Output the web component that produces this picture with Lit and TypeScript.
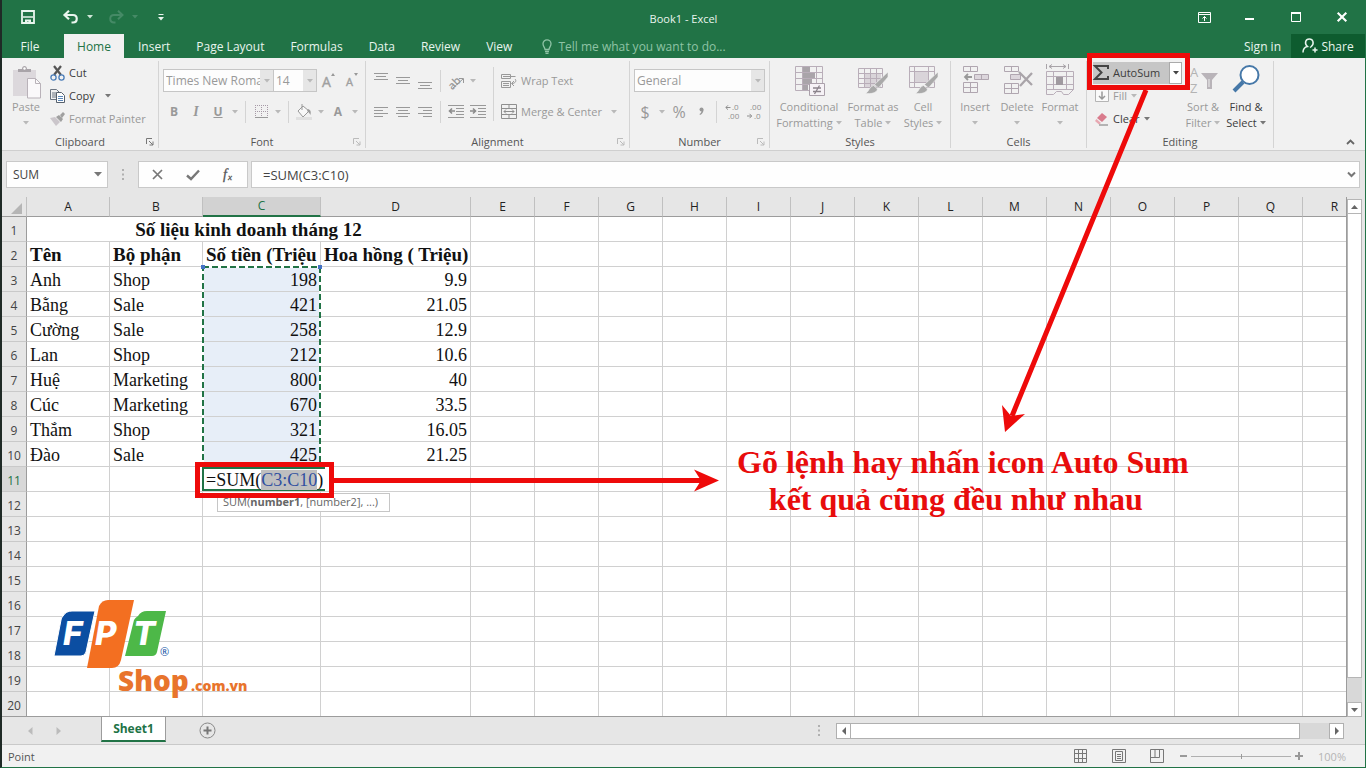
import { LitElement, html, svg, css, nothing } from "lit";
import { customElement } from "lit/decorators.js";
import { classMap } from "lit/directives/class-map.js";

const icon = (w: number, h: number, body: unknown) =>
  html`<svg class="ic" width=${w} height=${h} viewBox="0 0 ${w} ${h}" fill="none" aria-hidden="true">${body}</svg>`;

const G = "#b9b9b9";

const caret = (color = G) => icon(6, 4, svg`<path d="M0 0h6L3 3.6z" fill=${color} />`);

const lines = (rows: [number, number, number][]) =>
  icon(14, 18, rows.map(([x, y, w]) => svg`<rect x=${x} y=${y} width=${w} height="1" fill="#999" />`));

const alignTop = lines([[0, 1, 14], [2, 4, 10], [0, 7, 14]]);
const alignMid = lines([[0, 5, 14], [2, 8, 10], [0, 11, 14]]);
const alignBot = lines([[0, 10, 14], [2, 13, 10], [0, 16, 14]]);
const alignLeft = lines([[0, 4, 14], [0, 7, 9], [0, 10, 14], [0, 13, 9]]);
const alignCenter = lines([[0, 4, 14], [2, 7, 10], [0, 10, 14], [2, 13, 10]]);
const alignRight = lines([[0, 4, 14], [5, 7, 9], [0, 10, 14], [5, 13, 9]]);

const indent = (flip: boolean) =>
  icon(16, 16, svg`
    <g fill="#999">
      <rect x="0" y="1" width="16" height="1" /><rect x="8" y="4" width="8" height="1" />
      <rect x="8" y="7" width="8" height="1" /><rect x="8" y="10" width="8" height="1" />
      <rect x="0" y="13" width="16" height="1" />
    </g>
    <path d=${flip ? "M0 7h5M3 4.5 5.5 7 3 9.5" : "M7 7H2M4 4.5 1.5 7 4 9.5"} stroke="#8c8c8c" stroke-width="1.6" />`);

const brush = svg`<path d="M31 8v5L21.500 24l-4-3.500z" fill="#a9a9a9" stroke="#f1f1f1" stroke-width=".6" /><path d="M16.500 21.500l4 3.500c-1 4-6 5-12.500 4.500 4-1 4-7 8.500-8z" fill="#a9a9a9" stroke="#f1f1f1" stroke-width=".6" />`;

const launcher = (color: string) =>
  icon(8, 8, svg`<path d="M.5 6V.5H6M3 3l4 4M7 3.500V7H3.500" stroke=${color} />`);

const COLS = "ABCDEFGHIJKLMNOPQR".split("");
const PEOPLE: [string, string, string, string][] = [
  ["Anh", "Shop", "198", "9.9"],
  ["Bằng", "Sale", "421", "21.05"],
  ["Cường", "Sale", "258", "12.9"],
  ["Lan", "Shop", "212", "10.6"],
  ["Huệ", "Marketing", "800", "40"],
  ["Cúc", "Marketing", "670", "33.5"],
  ["Thắm", "Shop", "321", "16.05"],
  ["Đào", "Sale", "425", "21.25"],
];

const base = css`
  :host, * { box-sizing: border-box; }
  button, input {
    font: inherit; color: inherit; background: none; border: 0; padding: 0; margin: 0;
    border-radius: 0; outline: 0; min-width: 0;
  }
  button { display: inline-flex; align-items: center; justify-content: center; white-space: nowrap; }
  svg { display: block; flex: none; overflow: visible; }
`;

@customElement("excel-titlebar")
class ExcelTitlebar extends LitElement {
  static styles = [base, css`
    :host { display: block; background: #217346; color: #e9f5ee; }
    .top { display: grid; grid-template-columns: 1fr auto 1fr; align-items: center; height: 34px; }
    .quick { display: flex; align-items: center; padding-left: 19px; gap: 8px; }
    .quick button { height: 22px; min-width: 6px; }
    .save { margin-right: 20px; }
    .redo { margin-left: 7px; }
    .more { margin-left: 12px; }
    .title { font-size: 11px; padding-top: 3px; }
    .win { display: flex; justify-content: flex-end; }
    .win button { width: 46px; height: 32px; }
    .tabs { display: flex; height: 24px; align-items: stretch; font-size: 12px; }
    .tab { display: flex; align-items: center; justify-content: center; color: inherit; text-decoration: none; padding: 0 13px; }
    .file { width: 62px; padding: 0 6px 0 0; }
    .home { width: 60px; padding: 0; margin-right: 1px; background: #f1f1f1; color: #217346; }
    .tell { display: flex; align-items: center; gap: 6px; margin-left: 17px; color: #8fc3a5; flex: 1; }
    .tell input { width: 220px; }
    .tell input::placeholder { color: #8fc3a5; opacity: 1; }
    .sign { font-size: 12px; padding: 0 10px; }
    .share { width: 74px; background: #0e5c2f; gap: 3px; }
  `];
  render() {
    return html`
      <div class="top">
        <div class="quick">
          <button class="save" aria-label="Save">${icon(14, 14, svg`<path d="M1 1h12v12H1z" stroke="#e9f5ee" stroke-width="1.800" /><path d="M2 7h10" stroke="#e9f5ee" stroke-width="1.500" /><path d="M4 9.500h6V13H7.500v-1.500H6V13H4z" fill="#e9f5ee" />`)}</button>
          <button aria-label="Undo">${icon(16, 14, svg`<path d="M1.500 5h8.500c5 0 5 7.500 0 7.500H8.500M6 .800 1.500 5 6 9.200" stroke="#e9f5ee" stroke-width="2.200" />`)}</button>
          <button aria-label="Undo options">${caret("#cfe6d8")}</button>
          <button class="redo" aria-label="Redo">${icon(16, 14, svg`<path d="M14.500 5H6C1 5 1 12.500 6 12.500h1.500M10 .800 14.500 5 10 9.200" stroke="#458a66" stroke-width="2" />`)}</button>
          <button aria-label="Redo options">${caret("#458a66")}</button>
          <button class="more" aria-label="Customize toolbar">${icon(6, 7, svg`<path d="M.500 .500h5" stroke="#e9f5ee" /><path d="M0 3h6L3 6.500z" fill="#e9f5ee" />`)}</button>
        </div>
        <div class="title">Book1 - Excel</div>
        <div class="win">
          <button aria-label="Ribbon display">${icon(13, 11, svg`<path d="M.500 .500h12v10H.500zM.500 2.500h12M6.500 9V4.500M4.500 6.500l2-2 2 2" stroke="#fff" />`)}</button>
          <button aria-label="Minimize">${icon(10, 10, svg`<path d="M0 7h9" stroke="#fff" stroke-width="2" />`)}</button>
          <button aria-label="Maximize">${icon(10, 10, svg`<path d="M.500 1h9v8.500h-9z" stroke="#fff" /><path d="M0 1h10" stroke="#fff" stroke-width="2" />`)}</button>
          <button aria-label="Close">${icon(10, 10, svg`<path d="M.700 .700l8.600 8.600M9.300 .700.700 9.300" stroke="#fff" stroke-width="2.100" />`)}</button>
        </div>
      </div>
      <nav class="tabs">
        <a class="tab file" href="#file">File</a>
        <a class="tab home" href="#home">Home</a>
        ${["Insert", "Page Layout", "Formulas", "Data", "Review", "View"].map((t) => html`<a class="tab" href="#${t}">${t}</a>`)}
        <label class="tell">${icon(10, 15, svg`<path d="M3 10.500C3 8.500 1 7.500 1 4.800a4 4 0 0 1 8 0c0 2.700-2 3.700-2 5.700zM3 12.500h4M3.500 14.300h3" stroke="#8fc3a5" stroke-width="1.300" />`)}
          <input placeholder="Tell me what you want to do..." aria-label="Tell me what you want to do" /></label>
        <a class="tab sign" href="#signin">Sign in</a>
        <button class="share">${icon(16, 16, svg`<path d="M1 14.500c0-3.500 2-5.500 4.500-6C2 5.500 3.500 1 7.300 1s5.300 4.500 2 7.500L8 9.500M10.500 12h5M13 9.500v5" stroke="#e9f5ee" stroke-width="1.500" />`)}Share</button>
      </nav>`;
  }
}

@customElement("excel-ribbon")
class ExcelRibbon extends LitElement {
  static styles = [base, css`
    :host { display: flex; position: relative; background: #f1f1f1; border-bottom: 1px solid #cfcfcf; height: 93px; padding: 3px 0 2px; font-size: 11px; color: #999; }
    .group { display: flex; flex-direction: column; border-right: 1px solid #d4d4d4; flex: none; }
    .body { flex: 1; display: flex; min-height: 0; }
    .foot { display: grid; grid-template-columns: 1fr auto 1fr; align-items: center; height: 13px; flex: none; color: #555; }
    .foot span { grid-column: 2; line-height: 13px; }
    .foot button { justify-self: end; margin-right: 4px; }
    .clip { width: 157px; } .font { width: 207px; } .align { width: 264px; } .num { width: 140px; }
    .styles { width: 181px; } .cells { width: 136px; } .edit { width: 187px; }
    .stack { display: flex; flex-direction: column; align-items: flex-start; }
    .row { display: flex; align-items: center; height: 31px; }
    .two { padding-top: 4px; }
    .small { display: flex; height: 23px; justify-content: flex-start; align-items: center; gap: 4px; }
    .on { color: #3c3c3c; }
    .big { flex-direction: column; justify-content: flex-start; padding-top: 3px; line-height: 16px; }
    .big .ic32 { height: 35px; }
    .big .second { display: flex; align-items: center; gap: 3px; height: 16px; }
    .paste { width: 48px; }
    .b { width: 22px; height: 22px; font-size: 12px; }
    .c { width: 12px; height: 22px; }
    .bold { font-weight: 700; } .ital { font-style: italic; font-weight: 700; font-size: 14px; font-family: "Liberation Serif", serif; } .under { text-decoration: underline; font-weight: 700; }
    .sep { width: 1px; height: 22px; background: #d4d4d4; margin: 0 4px; flex: none; }
    .tall { height: 54px; margin-top: 6px; }
    .combo { display: flex; height: 23px; background: #fdfdfd; border: 1px solid #c6c6c6; font-size: 12px; }
    .combo input { flex: 1; padding-left: 2px; width: 0; }
    .combo button { width: 13px; background: #e6e6e6; }
    .fontname { width: 111px; } .fontsize { width: 43px; border-left: 0; } .fmt { width: 131px; }
    .in3 { padding-left: 3px; } .in4 { padding-left: 4px; }
    .wide { gap: 4px; padding-left: 3px; }
    .wide .caret { margin-left: 5px; }
    .grow { width: 23px; }
    .glyph { font-size: 16px; }
    .edit .small { padding-left: 3px; }
    .edit .sumrow { padding-left: 2px; gap: 0; }
    .sum { background: #c6c6c6; width: 76px; height: 22px; gap: 4px; padding-left: 1px; justify-content: flex-start; color: #3c3c3c; }
    .sumc { background: #fff; width: 13px; height: 22px; border: 1px solid #aaa; }
    .c44 { width: 44px; } .c42 { width: 42px; } .c56 { width: 58px; } .c68 { width: 70px; }
    .edit .stack { width: 91px; }
    .collapse { position: absolute; right: 10px; bottom: 5px; }
  `];

  private foot(label: string, launch?: string) {
    return html`<div class="foot"><span>${label}</span>${launch ? html`<button aria-label="${label} settings">${launcher(launch)}</button>` : nothing}</div>`;
  }
  private big(cls: string, pic: unknown, a: string, b: string | null, color = G) {
    return html`<button class="big ${cls}"><span class="ic32">${pic}</span><span>${a}</span><span class="second">${b}${caret(color)}</span></button>`;
  }
  private caretBtn(label: string) {
    return html`<button class="c" aria-label=${label}>${caret()}</button>`;
  }

  render() {
    const rows = (body: unknown) => icon(32, 34, body);
    return html`
      <section class="group clip">
        <div class="body">
          ${this.big("paste", rows(svg`<path d="M3 6h23v26H3z" fill="#dcd8dc" /><path d="M8 8V5h4c0-4 5-4 5 0h4v3z" fill="#a9a4a9" /><circle cx="14.500" cy="4.500" r="1.200" fill="#fff" /><path d="M17.500 14.500h8l5 5V34h-13z" fill="#faf8fa" stroke="#b9b2b9" /><path d="M25.500 14.500v5h5" stroke="#b9b2b9" />`), "Paste", null)}
          <div class="stack">
            <button class="small on">${icon(15, 16, svg`<path d="M4 1l7 9M11 1 4 10" stroke="#555" stroke-width="2.200" /><circle cx="3.500" cy="12.500" r="2.600" stroke="#4a7db8" stroke-width="1.300" /><circle cx="11.500" cy="12.500" r="2.600" stroke="#4a7db8" stroke-width="1.300" />`)}Cut</button>
            <button class="small on">${icon(15, 14, svg`<path d="M.500 .500h6l3 3v7h-9zM2 4h4M2 6h4M2 8h4" stroke="#6b7480" /><path d="M6.500 3.500h5l3 3v7h-8z" fill="#fff" stroke="#56606c" /><path d="M8 7.500h5M8 9.500h5M8 11.500h5" stroke="#5b86b8" />`)}<span>Copy</span>${icon(12, 4, svg`<path d="M6 0h6L9 3.600z" fill="#777" />`)}</button>
            <button class="small">${icon(15, 14, svg`<path d="M10 3l3-3 2 2-3 4zM6 5l3-2 4 4-2 3z" fill="#a0a0a0" /><path d="M0 6l5-1 5 5-4 4z" fill="#cbc6cb" />`)}Format Painter</button>
          </div>
        </div>
        ${this.foot("Clipboard", "#777")}
      </section>

      <section class="group font">
        <div class="body"><div class="stack two in4">
          <div class="row">
            <div class="combo fontname"><input aria-label="Font" value="Times New Roma" /><button aria-label="Font list">${caret()}</button></div>
            <div class="combo fontsize"><input aria-label="Font size" value="14" /><button aria-label="Size list">${caret()}</button></div>
            <button class="grow" aria-label="Grow font">${icon(13, 18, svg`<path d="M9 4h4l-2-3z" fill="#999" /><text x="0" y="15" font-size="14" fill="#a0a0a0" stroke="#a0a0a0" stroke-width=".4">A</text>`)}</button>
            <button class="grow" aria-label="Shrink font">${icon(12, 18, svg`<path d="M8 1h4l-2 3z" fill="#999" /><text x="0" y="14" font-size="11" fill="#a0a0a0" stroke="#a0a0a0" stroke-width=".4">A</text>`)}</button>
          </div>
          <div class="row">
            <button class="b bold">B</button><button class="b ital">I</button><button class="b under">U</button>${this.caretBtn("Underline style")}
            <i class="sep"></i>
            <button class="b" aria-label="Borders">${icon(13, 13, svg`<path d="M0 .500h13M.500 0v12M6.500 0v12M12.500 0v12M0 6.500h13" stroke="#a79aa7" stroke-dasharray="1 1" /><path d="M0 12.500h13" stroke="#999" />`)}</button>${this.caretBtn("Border list")}
            <i class="sep"></i>
            <button class="b" aria-label="Fill colour">${icon(16, 16, svg`<path d="M2 7l5-5 6 5-6 6z" stroke="#999" fill="#f8f8f8" /><path d="M6 0v6" stroke="#999" /><path d="M12 5c3 1 3 3 2.500 6-1-2-2-3-3.500-4z" fill="#999" /><path d="M0 13h16v3H0z" fill="#e0e0e0" />`)}</button>${this.caretBtn("Fill list")}
            <button class="b bold">A</button>${this.caretBtn("Font colour list")}
          </div>
        </div></div>
        ${this.foot("Font", "#bbb")}
      </section>

      <section class="group align">
        <div class="body">
          <div class="stack two in4">
            <div class="row">
              <button class="b" aria-label="Top align">${alignTop}</button><button class="b" aria-label="Middle align">${alignMid}</button><button class="b" aria-label="Bottom align">${alignBot}</button>
              <i class="sep"></i>
              <button class="b" aria-label="Orientation">${icon(17, 16, svg`<text x="-1" y="13" font-size="11" font-weight="600" fill="#999" transform="rotate(-45 7 9)">ab</text><path d="M5 15 15 6M11 5.500h4.500V10" stroke="#999" />`)}</button>${this.caretBtn("Orientation list")}
            </div>
            <div class="row">
              <button class="b" aria-label="Align left">${alignLeft}</button><button class="b" aria-label="Center">${alignCenter}</button><button class="b" aria-label="Align right">${alignRight}</button>
              <i class="sep"></i>
              <button class="b" aria-label="Decrease indent">${indent(false)}</button><button class="b" aria-label="Increase indent">${indent(true)}</button>
            </div>
          </div>
          <i class="sep tall"></i>
          <div class="stack two">
            <button class="row wide">${icon(16, 16, svg`<path d="M.500 1.500h9v4h-9zM.500 8.500h9v6h-9zM2 3.500h12.500M2 10.500h6M2 12.500h6M14 6c2 2 0 4.500-3 4.500M13 8l-2.500 2.500 2.500 2.500" stroke="#999" />`)}Wrap Text</button>
            <button class="row wide">${icon(16, 16, svg`<path d="M.500 .500h15v14H.500zM.500 4.500h15M.500 10.500h15M8 0v4.500M8 10.500V15M3 7.500h10M5 5.500l-2 2 2 2M11 5.500l2 2-2 2" stroke="#8f8f8f" />`)}Merge &amp; Center<span class="caret">${caret()}</span></button>
          </div>
        </div>
        ${this.foot("Alignment", "#bbb")}
      </section>

      <section class="group num">
        <div class="body"><div class="stack two in4">
          <div class="row"><div class="combo fmt"><input aria-label="Number format" value="General" /><button aria-label="Format list">${caret()}</button></div></div>
          <div class="row">
            <button class="b glyph">$</button>${this.caretBtn("Currency list")}
            <button class="b glyph">%</button><button class="b" aria-label="Comma style">${icon(5, 9, svg`<circle cx="2.500" cy="2.500" r="2" fill="#999" /><path d="M4.500 2.500c0 3-1.500 4.500-3.500 5.500l-.5-1c1.200-.8 2-1.500 2-3z" fill="#999" />`)}</button>
            <i class="sep"></i>
            <button class="b" aria-label="Increase decimal">${icon(15, 18, svg`<path d="M5.500 4.500H1M3 2.300.800 4.500 3 6.700" stroke="#8f8f8f" /><text x="7" y="7" font-size="8" fill="#8f8f8f">.0</text><text x="3" y="16" font-size="8" fill="#8f8f8f">.00</text>`)}</button>
            <button class="b" aria-label="Decrease decimal">${icon(15, 18, svg`<path d="M0 13h4.500M2.500 10.800 4.700 13l-2.200 2.200" stroke="#8f8f8f" /><text x="3" y="7" font-size="8" fill="#8f8f8f">.00</text><text x="7" y="16" font-size="8" fill="#8f8f8f">.0</text>`)}</button>
          </div>
        </div></div>
        ${this.foot("Number", "#bbb")}
      </section>

      <section class="group styles">
        <div class="body in4">
          ${this.big("c68", rows(svg`<path d="M2.500 2.500h27v24h-27zM2.500 8.500h27M2.500 14.500h27M2.500 20.500h27M9.500 2.500v24M23.500 2.500v24" stroke="#b9aeb9" fill="none" /><path d="M10 3h7v5h-7zM10 9h12v5H10zM10 15h9v5h-9zM10 21h5v5h-5z" fill="#a9a4a9" /><path d="M16.500 19.500h15v12h-15z" fill="#f6f2f6" stroke="#aaa0aa" /><path d="M20 24h8M20 27.500h8M26.500 21.500l-5 8.500" stroke="#8c848c" stroke-width="1.300" />`), "Conditional", "Formatting")}
          ${this.big("c56", rows(svg`<path d="M7 9h17v15H7z" fill="#d9d4d9" /><path d="M1.500 4.500h24v19h-24zM1.500 9.500h24M1.500 14.500h24M1.500 19.500h24M7.500 4.500v19M13.500 4.500v19M19.500 4.500v19" stroke="#b9aeb9" />${brush}`), "Format as", "Table")}
          ${this.big("c42", rows(svg`<path d="M7 8h14v11H7z" fill="#d9d4d9" /><path d="M2.500 2.500h25v21h-25zM2.500 7.500h25M2.500 18.500h25M7.500 2.500v21M21.500 2.500v21" stroke="#b9aeb9" />${brush}`), "Cell", "Styles")}
        </div>
        ${this.foot("Styles")}
      </section>

      <section class="group cells">
        <div class="body in3">
          ${this.big("c42", rows(svg`<path d="M4.500 2.500h14v5h-14zM11.500 2.500v5M4.500 18.500h14v10h-14zM4.500 23.500h14M11.500 18.500v10" stroke="#b0a6b0" /><path d="M15.500 10.500h14v5h-14zM22.500 10.500v5" stroke="#b0a6b0" fill="#dcd6dc" /><path d="M13 13H6M9 10l-3 3 3 3" stroke="#999" stroke-width="1.800" />`), "Insert", null)}
          ${this.big("c42", rows(svg`<path d="M3.500 2.500h14v5h-14zM10.500 2.500v5M3.500 19.500h14v10h-14zM3.500 24.500h14M10.500 19.500v10" stroke="#b0a6b0" /><path d="M9.500 10.500h10v5h-10z" stroke="#b0a6b0" fill="#dcd6dc" /><path d="M18 8l13 13M31 9 19 22" stroke="#a9a4a9" stroke-width="2.300" />`), "Delete", null)}
          ${this.big("c44", rows(svg`<path d="M2.500 0v5M24.500 0v5M5 2.500h17M8 .500l-3 2 3 2M19 .500l3 2-3 2" stroke="#a9a4a9" /><path d="M2.500 7.500h27v18h-27zM2.500 12.500h27M2.500 20.500h27M9.500 7.500v18M22.500 7.500v18M2.500 25.500v5h7l3-3h5l2 3h5l5-5" stroke="#b9aeb9" /><path d="M12 13h7v8h-7z" fill="#a09aa0" />`), "Format", null)}
        </div>
        ${this.foot("Cells")}
      </section>

      <section class="group edit">
        <div class="body in4">
          <div class="stack">
            <div class="small sumrow"><button class="sum">${icon(15, 15, svg`<path d="M14 4V1H1l6.500 6.500L1 14h13v-3" stroke="#444" stroke-width="2" />`)}AutoSum</button><button class="sumc" aria-label="AutoSum list">${caret("#444")}</button></div>
            <button class="small">${icon(15, 14, svg`<path d="M1.500 .500h13v12h-13z" fill="#fafafa" stroke="#b5b5b5" /><path d="M8 2.500V10M5 7l3 3 3-3" stroke="#999" stroke-width="1.500" />`)}Fill${caret()}</button>
            <button class="small on">${icon(15, 14, svg`<path d="M8 1l5 4-5 5-5-4z" fill="#d97b8c" /><path d="M2.500 7l4.500 4-2 1.500L1 9z" fill="#e8a8b2" /><path d="M5 13h9" stroke="#777" />`)}Clear${caret("#777")}</button>
          </div>
          ${this.big("c42", rows(svg`<text x="3" y="13" font-size="13" fill="#b3b3b3">A</text><text x="3" y="29" font-size="13" fill="#b3b3b3">Z</text><path d="M14 9h17l-6 7v9h-5v-9z" fill="#b9b4b9" /><path d="M22 15v8" stroke="#eee" />`), "Sort &", "Filter")}
          ${this.big("c44 on", rows(svg`<path d="M13 18 4 27" stroke="#4678a8" stroke-width="4" /><circle cx="19.500" cy="11" r="9" fill="#fff" stroke="#4678a8" stroke-width="2" />`), "Find &", "Select", "#777")}
        </div>
        ${this.foot("Editing")}
      </section>
      <button class="collapse" aria-label="Collapse ribbon">${icon(9, 6, svg`<path d="M1 5l3.500-3.500L8 5" stroke="#666" stroke-width="1.800" />`)}</button>`;
  }
}

@customElement("excel-formula-bar")
class ExcelFormulaBar extends LitElement {
  static styles = [base, css`
    :host { display: flex; flex: none; height: 46px; padding: 10px 5px 9px 4px; background: #e6e6e6; font-size: 12px; color: #444; }
    .box { display: flex; align-items: center; background: #fefefe; border: 1px solid #c9c9c9; height: 27px; }
    .name { width: 102px; padding: 0 5px 0 6px; }
    .name input, .formula input { flex: 1; width: 0; }
    .dots { width: 30px; display: flex; align-items: center; justify-content: center; }
    .tools { width: 110px; justify-content: space-around; margin-right: 3px; }
    .tools button { width: 30px; height: 24px; }
    .formula { flex: 1; padding: 0 3px 0 11px; font-size: 13px; }
  `];
  render() {
    return html`
      <div class="box name"><input aria-label="Name box" value="SUM" /><button aria-label="Names">${icon(8, 5, svg`<path d="M0 0h8L4 4.500z" fill="#777" />`)}</button></div>
      <div class="dots">${icon(2, 11, svg`<path d="M0 1h2M0 5.500h2M0 10h2" stroke="#b0b0b0" stroke-width="2" />`)}</div>
      <div class="box tools">
        <button aria-label="Cancel">${icon(11, 11, svg`<path d="M1 1l9 9M10 1 1 10" stroke="#777" stroke-width="1.700" />`)}</button>
        <button aria-label="Enter">${icon(14, 12, svg`<path d="M1 6.500 5 10 13 1.500" stroke="#777" stroke-width="2.400" />`)}</button>
        <button aria-label="Insert function">${icon(14, 16, svg`<text x="1" y="12" font-size="14" font-style="italic" font-family="Liberation Serif" fill="#555" stroke="#555" stroke-width=".3">f</text><text x="6" y="13" font-size="9" font-style="italic" font-family="Liberation Serif" fill="#555" stroke="#555" stroke-width=".3">x</text>`)}</button>
      </div>
      <div class="box formula"><input aria-label="Formula" value="=SUM(C3:C10)" /><button aria-label="Expand">${icon(9, 7, svg`<path d="M1 1.500 4.500 5 8 1.500" stroke="#777" stroke-width="2" />`)}</button></div>`;
  }
}

@customElement("excel-sheet")
class ExcelSheet extends LitElement {
  static styles = [base, css`
    :host { display: flex; background: #e6e6e6; flex: 1; min-height: 0; }
    .view { position: relative; flex: 1; overflow: hidden; border-right: 1px solid #9c9c9c; border-bottom: 1px solid #9c9c9c; }
    table { border-collapse: separate; border-spacing: 0; table-layout: fixed; width: 1364px; }
    .w0 { width: 25px; } .w1 { width: 83px; } .w2 { width: 93px; } .w3 { width: 118px; } .w4 { width: 150px; } .w5 { width: 64px; }
    th { font-weight: 400; font-size: 12px; color: #444; padding: 0; background: #e6e6e6; text-align: center; line-height: 14px; }
    thead th { height: 20px; border-right: 1px solid #c0c0c0; border-bottom: 1px solid #9c9c9c; color: #222; }
    thead th.sel { background: #d2d2d2; color: #217346; border-bottom: 2px solid #217346; }
    .corner svg { margin: 4px 0 0 8px; }
    tbody th { border-right: 1px solid #9c9c9c; border-bottom: 1px solid #c9c9c9; padding-top: 4px; }
    tbody th.sel { background: #d8d8d8; color: #217346; }
    td { height: 25px; padding: 2px 3px 0; border-right: 1px solid #d0d0d0; border-bottom: 1px solid #d0d0d0; background: #fff;
      font: 18px/22px "Liberation Serif", "Times New Roman", serif; color: #111; white-space: nowrap; overflow: hidden; }
    .h { font-weight: 700; font-size: 19px; } .mid { text-align: center; } .n { text-align: right; }
    .pick { background: #e7eef8; }
    .ants, .edit, .hint { position: absolute; }
    .ants { left: 199px; top: 68px; }
    .edit { left: 200px; top: 270px; height: 24px; min-width: 119px; padding: 1px 2px 0; background: #fff; border: 2px solid #217346; border-right: 0; font: 18px/20px "Liberation Serif", serif; white-space: nowrap; color: #111; }
    .edit mark { background: #bfbfbf; color: #2f4fa0; }
    .hint { left: 215px; top: 296px; height: 19px; line-height: 15px; padding: 0 11px 0 5px; background: #fff; border: 1px solid #c6c6c6; color: #666; font-size: 11px; }
    .logo { position: absolute; left: 48px; top: 402px; }
    .vbar { width: 18px; display: flex; flex-direction: column; padding: 2px 3px 0 0; }
    .vbar button { width: 15px; height: 15px; background: #fff; border: 1px solid #b5b5b5; }
    .track { flex: 1; background: #d8d8d8; display: flex; flex-direction: column; width: 15px; }
    .thumb { flex: 0 0 95%; background: #fff; border: 1px solid #b5b5b5; border-top: 0; }
  `];
  render() {
    const cells = (r: number) => {
      if (r === 1) return [html`<td class="h mid" colspan="4">Số liệu kinh doanh tháng 12</td>`, ...this.blank(14)];
      if (r === 2) return [...["Tên", "Bộ phận", "Số tiền (Triệu", "Hoa hồng ( Triệu)"].map((t) => html`<td class="h">${t}</td>`), ...this.blank(14)];
      const p = PEOPLE[r - 3];
      if (!p) return this.blank(18);
      return [...p.map((t, i) => html`<td class=${classMap({ n: i > 1, pick: i === 2 })}>${t}</td>`), ...this.blank(14)];
    };
    return html`
      <div class="view">
        <table>
          <colgroup><col class="w0" /><col class="w1" /><col class="w2" /><col class="w3" /><col class="w4" />${COLS.slice(4).map(() => html`<col class="w5" />`)}</colgroup>
          <thead><tr><th class="corner">${icon(13, 13, svg`<path d="M12 1v11H1z" fill="#b5b5b5" />`)}</th>
            ${COLS.map((c) => html`<th class=${classMap({ sel: c === "C" })}>${c}</th>`)}</tr></thead>
          <tbody>${Array.from({ length: 20 }, (_, i) => html`<tr><th class=${classMap({ sel: i === 10 })}>${i + 1}</th>${cells(i + 1)}</tr>`)}</tbody>
        </table>
        <svg class="ants" width="122" height="204" fill="none">
          <path d="M2 2H119V202H2z" stroke="#fff" stroke-width="2" /><path d="M2 2H119V202H2z" stroke="#217346" stroke-width="2" stroke-dasharray="6 3" />
          <path d="M0 0h4v4H0zM117 0h4v4h-4z" fill="#4472c4" />
        </svg>
        <div class="hint">SUM(<b>number1</b>, [number2], ...)</div>
        <div class="edit">=SUM(<mark>C3:C10</mark>)</div>
        <svg class="logo" width="210" height="102" role="img" aria-label="FPT Shop">
          <path d="M13 17q3-5 9-5h23l-9 41q-1 4-5 4H4l7-36q0-2 2-4z" fill="#0b4ea2" stroke="#fff" stroke-width="1" />
          <path d="M49 7q3-6 9-6h26L71 61q-2 8-9 8H37z" fill="#f36f21" />
          <path d="M88 17q3-5 9-5h19l-9 41q-1 4-5 4H75l9-36q1-2 4-4z" fill="#4db848" />
          <g fill="#fff" font-family="Inter" font-weight="800" font-style="italic" font-size="33"><text x="13" y="46">F</text><text x="45" y="46">P</text><text x="83" y="46">T</text></g>
          <text x="110" y="57" font-size="11" fill="#0b4ea2" font-family="Open Sans">®</text>
          <text x="68" y="92" font-size="28" fill="#e8742c" font-family="Open Sans" font-weight="800">Shop</text>
          <text x="141" y="92" font-size="14" fill="#e8742c" font-family="Open Sans" font-weight="800">.com.vn</text>
        </svg>
      </div>
      <div class="vbar">
        <button aria-label="Scroll up">${icon(7, 4, svg`<path d="M0 4h7L3.500 0z" fill="#666" />`)}</button>
        <div class="track"><div class="thumb"></div></div>
        <button aria-label="Scroll down">${icon(7, 4, svg`<path d="M0 0h7L3.500 4z" fill="#666" />`)}</button>
      </div>`;
  }
  private blank(n: number) {
    return Array.from({ length: n }, () => html`<td></td>`);
  }
}

@customElement("excel-footer")
class ExcelFooter extends LitElement {
  static styles = [base, css`
    :host { display: block; background: #e6e6e6; font-size: 11px; color: #444; }
    .sheets { display: flex; align-items: center; height: 28px; padding-right: 21px; border-bottom: 1px solid #c9c9c9; }
    .nav { width: 99px; display: flex; gap: 23px; padding-left: 26px; }
    .tab { align-self: flex-start; height: 25px; width: 65px; background: #fff; color: #217346; font-weight: 700; font-size: 12px; border: 1px solid #9c9c9c; border-top: 0; border-bottom: 2px solid #217346; }
    .add { margin-left: 33px; }
    .gap { flex: 1; }
    .dots { margin-right: 16px; }
    .hbar { display: flex; height: 16px; width: 508px; background: #d8d8d8; }
    .hbar button { width: 15px; background: #fff; border: 1px solid #b0b0b0; }
    .thumb { width: 449px; background: #fff; border: 1px solid #b0b0b0; border-left: 0; }
    .rest { flex: 1; }
    .status { display: flex; align-items: center; height: 22px; background: #f1f1f1; padding: 0 19px 0 6px; color: #555; }
    .views { display: flex; gap: 24px; margin-right: 16px; }
    .zoom { display: flex; align-items: center; gap: 4px; }
    .zoom input { appearance: none; width: 100px; height: 13px; background: linear-gradient(#b0b0b0, #b0b0b0) center / 100% 1px no-repeat; }
    .zoom input::-webkit-slider-thumb { appearance: none; width: 1px; height: 5px; background: #999; }
    .pct { margin-left: 15px; color: #b5b5b5; }
  `];
  render() {
    return html`
      <div class="sheets">
        <div class="nav"><button aria-label="Previous sheet">${icon(5, 8, svg`<path d="M4.500 0v8L0 4z" fill="#bbb" />`)}</button><button aria-label="Next sheet">${icon(5, 8, svg`<path d="M.500 0v8L5 4z" fill="#bbb" />`)}</button></div>
        <button class="tab">Sheet1</button>
        <button class="add" aria-label="New sheet">${icon(17, 17, svg`<circle cx="8.500" cy="8.500" r="7.500" stroke="#888" /><path d="M4.500 8.500h8M8.500 4.500v8" stroke="#777" stroke-width="2" />`)}</button>
        <span class="gap"></span>
        <span class="dots">${icon(2, 11, svg`<path d="M0 1h2M0 5.500h2M0 10h2" stroke="#b0b0b0" stroke-width="2" />`)}</span>
        <div class="hbar"><button aria-label="Scroll left">${icon(4, 8, svg`<path d="M4 0v8L0 4z" fill="#666" />`)}</button><div class="thumb"></div><div class="rest"></div><button aria-label="Scroll right">${icon(4, 8, svg`<path d="M0 0v8l4-4z" fill="#666" />`)}</button></div>
      </div>
      <div class="status">
        <span>Point</span><span class="gap"></span>
        <div class="views">
          <button aria-label="Normal view">${icon(14, 14, svg`<path d="M.500 .500h12v13H.500zM4.500 0v14M8.500 0v14M0 4.500h13M0 9.500h13" stroke="#777" />`)}</button>
          <button aria-label="Page layout view">${icon(14, 14, svg`<path d="M.500 .500h13v13H.500zM3.500 2.500h7v9h-7zM5 5.500h4M5 7.500h4M5 9.500h4" stroke="#777" />`)}</button>
          <button aria-label="Page break view">${icon(14, 14, svg`<path d="M.500 .500h13v13H.500zM.500 8.500h9V.500M5 0v8" stroke="#777" />`)}</button>
        </div>
        <div class="zoom"><button aria-label="Zoom out">${icon(7, 8, svg`<path d="M0 4h7" stroke="#999" stroke-width="2" />`)}</button><input type="range" aria-label="Zoom" min="0" max="200" value="100" /><button aria-label="Zoom in">${icon(8, 8, svg`<path d="M0 4h8M4 0v8" stroke="#999" stroke-width="2" />`)}</button></div>
        <span class="pct">100%</span>
      </div>`;
  }
}

@customElement("app-root")
class AppRoot extends LitElement {
  static styles = css`
    :host { display: block; position: relative; height: 100vh; overflow: hidden; background: #dfeee5; font-family: "Open Sans", "Noto Sans", sans-serif; }
    .window { display: flex; flex-direction: column; height: 100%; border-left: 2px solid #1f2a26; border-right: 1px solid #217346; border-bottom: 1px solid #217346; box-sizing: border-box; }
    .marks { position: absolute; left: 0; top: 0; pointer-events: none; }
    .note { position: absolute; left: 737px; top: 444px; margin: 0; text-align: center; color: #e80c0c; font: 700 32px/37px "Liberation Serif", "Times New Roman", serif; white-space: nowrap; }
    .note span { display: block; padding-right: 14px; }
  `;
  render() {
    return html`
      <div class="window">
        <excel-titlebar></excel-titlebar>
        <excel-ribbon></excel-ribbon>
        <excel-formula-bar></excel-formula-bar>
        <excel-sheet></excel-sheet>
        <excel-footer></excel-footer>
      </div>
      <svg class="marks" width="1366" height="768" fill="none" aria-hidden="true">
        <g stroke="#ee0a0a" stroke-width="5">
          <path d="M1089.500 55.500h98v32h-98zM197.500 464.500h134v31h-134z" />
          <path d="M1146 90 1012 416M333 480.500H705" />
        </g>
        <path d="M1005 432l-3-27 9 11 14-2zM719 480.500l-25-11 7 11-7 11z" fill="#ee0a0a" />
      </svg>
      <p class="note">Gõ lệnh hay nhấn icon Auto Sum<span>kết quả cũng đều như nhau</span></p>`;
  }
}
